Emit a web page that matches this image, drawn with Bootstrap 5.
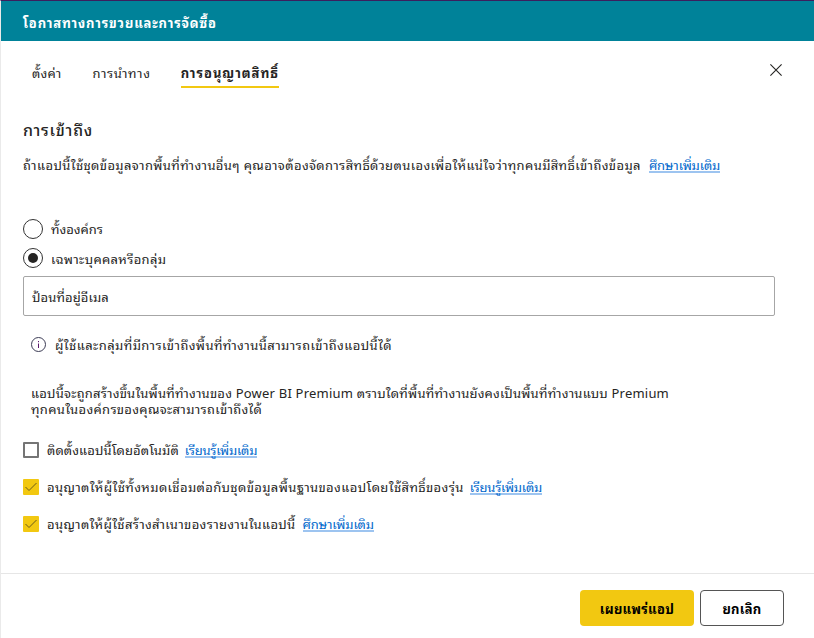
<!DOCTYPE html>
<html lang="th">
<head>
<meta charset="utf-8">
<title>โอกาสทางการขายและการจัดซื้อ</title>
<link href="https://cdn.jsdelivr.net/npm/bootstrap@5.3.0/dist/css/bootstrap.min.css" rel="stylesheet">
<style>
body{font-family:"Leelawadee UI","Noto Sans Thai Looped","Noto Looped Thai","Loma","Open Sans","Noto Sans",sans-serif;font-size:13px;line-height:16px;color:#252423;height:638px;overflow:hidden}
.pane{height:638px;border-top:1px solid #3b1f5e;border-left:1px solid #eaeaea}
.titlebar{height:40px;background:#008299;padding-left:22px;padding-top:4px}
.tabs{height:47px;padding-left:31px;padding-right:32px}
.tab{height:47px;padding-top:24px;border-bottom:2px solid transparent;margin-right:31px}
.tab.on{border-color:#f2c811;font-weight:700;margin:0 0 0 -1px;width:98px;white-space:nowrap}
.closer{width:12px;height:12px;margin-top:23px}
.body-area{height:485px;padding-left:22px;padding-right:39px}
.heading{font-size:16px;line-height:20px;margin:31px 0 0}
.intro{margin-top:18px}
a.more{color:#0068cc;text-decoration:none;border-bottom:2px solid #9dc4f0;line-height:15px;height:16px;display:inline-block;white-space:nowrap}
.intro .more{margin-left:8px}
.radios{margin-top:41px}
.radio-row{height:29px}
.ring{width:20px;height:20px;border:1px solid #333;border-radius:50%}
.dot{width:10px;height:10px;border-radius:50%;background:#252423}
.second{padding-top:3px}
.mail{height:40px;border:1px solid #a6a6a6;border-radius:2px;padding:2px 8px 0;margin-top:4px}
.note{margin-top:21px}
.premium{margin-top:32px}
.checks{margin-top:14px}
.check-row{height:37px;white-space:nowrap}
.box{width:16px;height:16px;border-radius:1px}
.box.off{border:2px solid #757575}
.box.yes{background:#f2c811}
.foot{height:65px;border-top:1px solid #e6e6e6;padding:16px 30px 0 0;gap:6px}
.foot .btn{height:36px;padding:2px 0 0;font-size:13px;font-weight:700;color:#000;border-radius:4px;letter-spacing:.25px}
.publish{width:114px;background:#f2c811}
.foot .cancel{width:84px;border:1px solid #555}
.t1{letter-spacing:.82px}.t2{letter-spacing:.2px}.t3{letter-spacing:.65px}.t4{letter-spacing:.95px}.t5{letter-spacing:.75px}
.t6{letter-spacing:.38px}.t7{letter-spacing:-.16px}.t9{letter-spacing:.32px}.t10{letter-spacing:.1px}.t11{letter-spacing:.42px}.t12{letter-spacing:.21px}
.t13{letter-spacing:.32px}.t14{letter-spacing:.1px;margin-right:-2px}.t15{letter-spacing:-.24px}.t16{letter-spacing:.38px;margin-right:-2px}.t17{letter-spacing:.34px;margin-right:-1px}
</style>
</head>
<body>
<div class="pane d-flex flex-column">
  <header class="titlebar d-flex align-items-center text-white fw-bold"><span class="t1">โอกาสทางการขวยและการจัดซื้อ</span></header>
  <nav class="tabs d-flex">
    <div class="tab"><span class="t2">ตั้งค่า</span></div>
    <div class="tab"><span class="t3">การนำทาง</span></div>
    <div class="tab on"><span class="t4">การอนุญาตสิทธิ์</span></div>
    <svg class="closer ms-auto" viewBox="0 0 12 12" fill="none" stroke="#252423" stroke-width="1.1"><path d="M.4.4 11.6 11.6M11.6.4.4 11.6"/></svg>
  </nav>
  <main class="body-area">
    <h1 class="heading"><span class="t5">การเข้าถึง</span></h1>
    <div class="intro d-flex text-nowrap"><span class="t6">ถ้าแอปนี้ใช้ชุดข้อมูลจากพื้นที่ทำงานอื่นๆ คุณอาจต้องจัดการสิทธิ์ด้วยตนเองเพื่อให้แน่ใจว่าทุกคนมีสิทธิ์เข้าถึงข้อมูล</span><a class="more" href="#"><span class="t7">ศึกษาเพิ่มเติม</span></a></div>
    <div class="radios">
      <div class="radio-row d-flex align-items-center gap-2"><span class="ring"></span><span class="t8">ทั้งองค์กร</span></div>
      <div class="radio-row d-flex align-items-center gap-2"><span class="ring d-flex align-items-center justify-content-center"><span class="dot"></span></span><span class="t9 second">เฉพาะบุคคลหรือกลุ่ม</span></div>
    </div>
    <div class="mail d-flex align-items-center"><span class="t10">ป้อนที่อยู่อีเมล</span></div>
    <div class="note d-flex align-items-center gap-2 ps-2"><svg width="16" height="16" viewBox="0 0 16 16" fill="none" stroke="#3c3c55"><circle cx="7.5" cy="7.5" r="7"/><path d="M7.5 6.5V11M7.5 4v1.2" stroke="#5c1a6e"/></svg><span class="t11">ผู้ใช้และกลุ่มที่มีการเข้าถึงพื้นที่ทำงานนี้สามารถเข้าถึงแอปนี้ได้</span></div>
    <div class="premium text-nowrap ps-2"><span class="t12">แอปนี้จะถูกสร้างขึ้นในพื้นที่ทำงานของ Power BI Premium ตราบใดที่พื้นที่ทำงานยังคงเป็นพื้นที่ทำงานแบบ Premium</span><br><span class="t13">ทุกคนในองค์กรของคุณจะสามารถเข้าถึงได้</span></div>
    <div class="checks">
      <div class="check-row d-flex align-items-center gap-2"><span class="box off"></span><span class="t14">ติดตั้งแอปนี้โดยอัตโนมัติ</span><a class="more" href="#"><span class="t15">เรียนรู้เพิ่มเติม</span></a></div>
      <div class="check-row d-flex align-items-center gap-2"><span class="box yes d-flex"><svg width="16" height="16" viewBox="0 0 16 16" fill="none" stroke="#6b5c1c"><path d="M2.5 8 6 11.5l7.5-7.5"/></svg></span><span class="t16">อนุญาตให้ผู้ใช้ทั้งหมดเชื่อมต่อกับชุดข้อมูลพื้นฐานของแอปโดยใช้สิทธิ์ของรุ่น</span><a class="more" href="#"><span class="t15">เรียนรู้เพิ่มเติม</span></a></div>
      <div class="check-row d-flex align-items-center gap-2"><span class="box yes d-flex"><svg width="16" height="16" viewBox="0 0 16 16" fill="none" stroke="#6b5c1c"><path d="M2.5 8 6 11.5l7.5-7.5"/></svg></span><span class="t17">อนุญาตให้ผู้ใช้สร้างสำเนาของรายงานในแอปนี้</span><a class="more" href="#"><span class="t7">ศึกษาเพิ่มเติม</span></a></div>
    </div>
  </main>
  <footer class="foot d-flex justify-content-end"><button class="btn publish">เผยแพร่แอป</button><button class="btn cancel">ยกเลิก</button></footer>
</div>
<script src="https://cdn.jsdelivr.net/npm/bootstrap@5.3.0/dist/js/bootstrap.bundle.min.js"></script>
</body>
</html>
